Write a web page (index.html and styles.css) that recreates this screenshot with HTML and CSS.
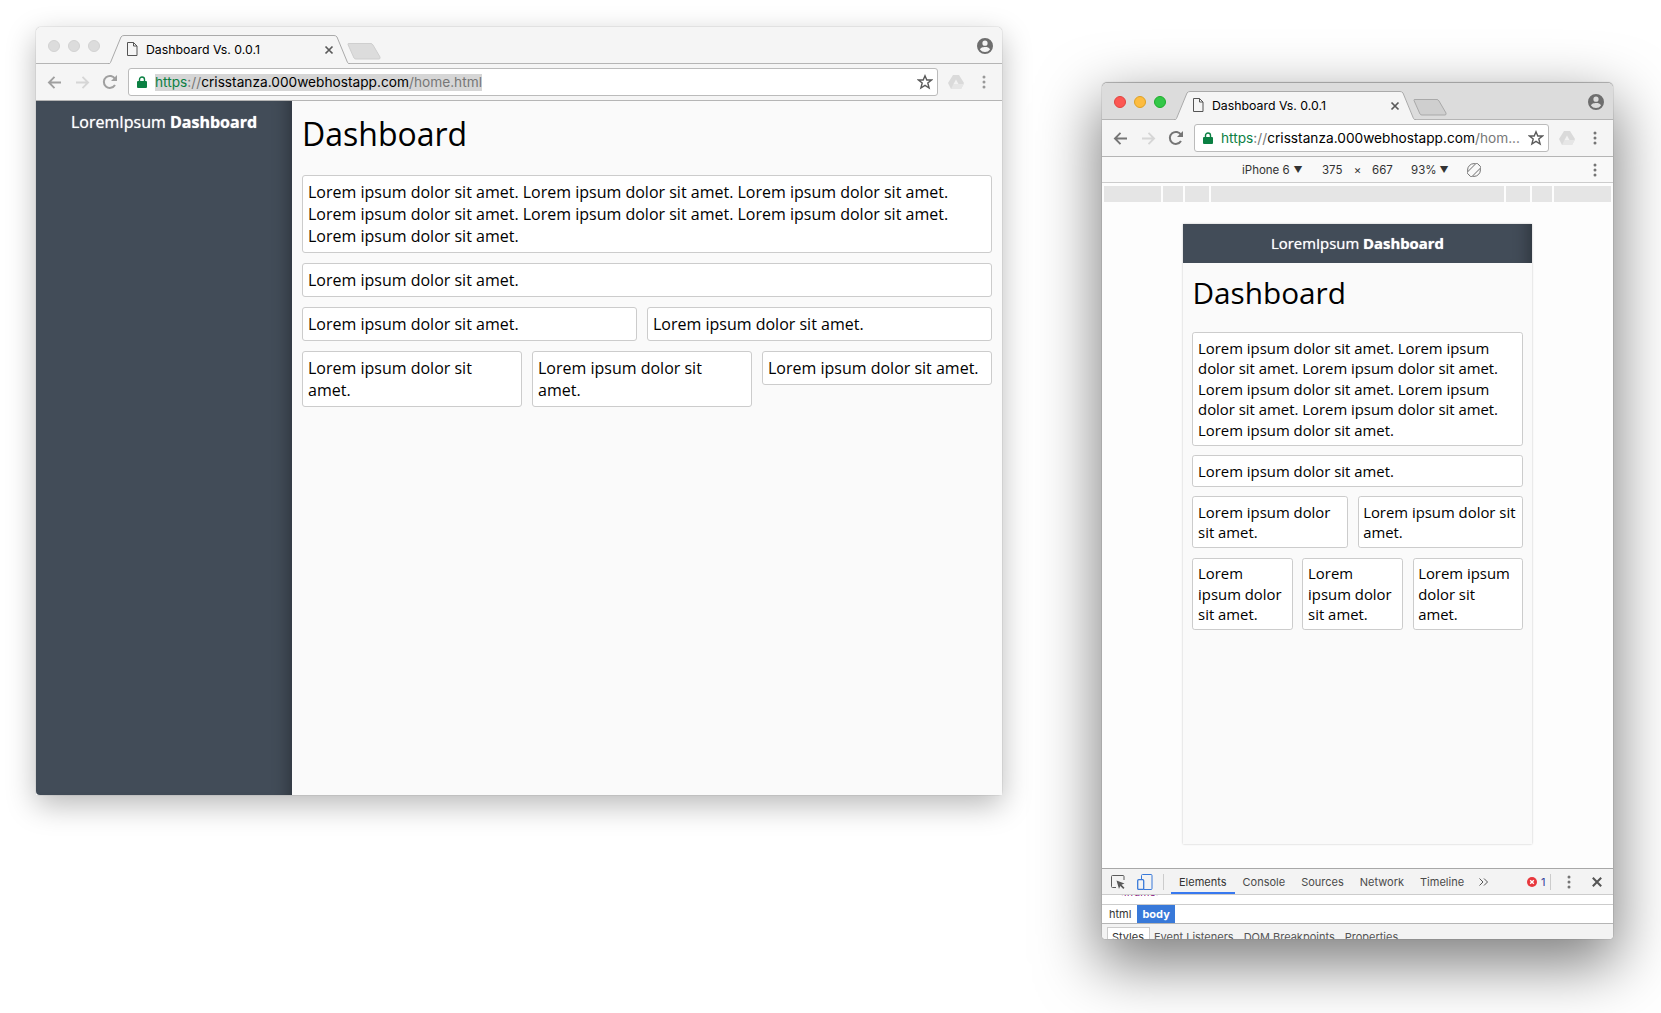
FILE: index.html
```html
<!DOCTYPE html>
<html>
<head>
<meta charset="utf-8">
	<title>Dashboard Vs. 0.0.1</title>
	<link rel="stylesheet" href="styles.css">
</head>
<body>
<svg class="sprite" width="0" height="0">
	<symbol id="i-tab" viewBox="0 0 242 29"><path class="tab-fill" d="M0 29L2 28 13 2Q14 0 16 0H226Q228 0 229 2L240 28 242 29Z"/><path class="tab-line" d="M0 28.5H1.500Q2 28.500 2.500 27.500L13 2Q14 .5 16 .5H226Q228 .5 229 2L239.500 27.500Q240 28.500 241 28.500H242"/></symbol>
	<symbol id="i-new" viewBox="0 0 34 17"><path d="M1 1.500Q.5.5 2 .5H24Q25 .5 26 2L33 14Q33.500 16 32 16H9Q7.500 16 7 15Z"/></symbol>
	<symbol id="i-doc" viewBox="0 0 12 14"><path d="M1.500.5H7.500L11 4V13.500H1.500ZM7.500.5V4H11" fill="none" stroke="currentColor"/></symbol>
	<symbol id="i-close" viewBox="0 0 10 10"><path d="M1.500 1.500L8.500 8.500M8.500 1.500L1.500 8.500" fill="none" stroke="currentColor" stroke-width="1.700"/></symbol>
	<symbol id="i-user" viewBox="0 0 16 16"><path fill-rule="evenodd" fill="currentColor" d="M8 0a8 8 0 1 0 0 16A8 8 0 0 0 8 0ZM8 2.600a2.600 2.600 0 1 1 0 5.200 2.600 2.600 0 0 1 0-5.200ZM8 14a6 6 0 0 1-5-2.600c0-1.700 3.300-2.500 5-2.500s5 .8 5 2.500A6 6 0 0 1 8 14Z"/></symbol>
	<symbol id="i-back" viewBox="0 0 16 14"><path d="M15 7H2M8 1L2 7l6 6" fill="none" stroke="currentColor" stroke-width="2"/></symbol>
	<symbol id="i-fwd" viewBox="0 0 16 14"><path d="M1 7H14M8 1l6 6-6 6" fill="none" stroke="currentColor" stroke-width="2"/></symbol>
	<symbol id="i-reload" viewBox="0 0 16 16"><path d="M13 11a6 6 0 1 1 .1-6" fill="none" stroke="currentColor" stroke-width="2"/><path d="M15 1V7H9Z" fill="currentColor"/></symbol>
	<symbol id="i-lock" viewBox="0 0 10 12"><path d="M2.500 5V3.500a2.500 2.500 0 0 1 5 0V5" fill="none" stroke="currentColor" stroke-width="1.400"/><rect y="5" width="10" height="7" rx="1" fill="currentColor"/></symbol>
	<symbol id="i-star" viewBox="0 0 16 16"><path d="M8 1.800L9.800 6H14.500L10.800 9 12.100 14 8 11.300 3.900 14 5.200 9 1.500 6H6.200Z" fill="none" stroke="currentColor" stroke-width="1.400"/></symbol>
	<symbol id="i-drive" viewBox="0 0 16 14"><path d="M5 0H11L16 8 13 14H3L0 8Z" fill="#dadada"/><path d="M8 4.500L10.500 9H5.500Z" fill="#f2f2f2"/><path d="M3 14L5.500 9H16L13 14Z" fill="#e6e6e6"/></symbol>
	<symbol id="i-dots" viewBox="0 0 4 14"><circle cx="2" cy="2" r="1.500" fill="currentColor"/><circle cx="2" cy="7" r="1.500" fill="currentColor"/><circle cx="2" cy="12" r="1.500" fill="currentColor"/></symbol>
	<symbol id="i-rotate" viewBox="0 0 14 14"><g fill="none" stroke="currentColor" stroke-width=".9"><circle cx="7" cy="7" r="6.400"/><rect x="3.800" y="0" width="6.400" height="14" rx="1" transform="rotate(45 7 7)" fill="#f9f9f9"/></g></symbol>
	<symbol id="i-inspect" viewBox="0 0 14 14"><path d="M5 12.500H1.500a1 1 0 0 1-1-1V1.500a1 1 0 0 1 1-1H12a1 1 0 0 1 1 1V5" fill="none" stroke="currentColor"/><path d="M5.500 5.500L13.500 8.500 10.500 9.800 13.500 12.800 12.300 14 9.300 11 8 14Z" fill="currentColor"/></symbol>
	<symbol id="i-device" viewBox="0 0 16 16"><path d="M4.500 5.500V1.500a1 1 0 0 1 1-1H14a1 1 0 0 1 1 1V14.500a1 1 0 0 1-1 1H7" fill="none" stroke="#3879d9"/><rect x=".7" y="5.700" width="6" height="9.700" rx="1" fill="#f3f3f3" stroke="#3879d9" stroke-width="1.300"/></symbol>
	<symbol id="i-error" viewBox="0 0 10 10"><circle cx="5" cy="5" r="5" fill="#e8383d"/><path d="M3.200 3.200L6.800 6.800M6.800 3.200L3.200 6.800" stroke="#fff" stroke-width="1.400"/></symbol>
	<symbol id="i-more" viewBox="0 0 10 8"><path d="M.5.5L4 4 .5 7.500M5 .5L8.500 4 5 7.500" fill="none" stroke="currentColor"/></symbol>
</svg>

<!-- desktop window -->
<div class="window window-wide">
	<div class="tabstrip">
		<div class="lights">
			<span class="light"></span><span class="light"></span><span class="light"></span>
		</div>
		<div class="tab">
			<svg class="tab-shape"><use href="#i-tab"/></svg>
			<svg class="tab-doc"><use href="#i-doc"/></svg>
			<span class="tab-title">Dashboard Vs. 0.0.1</span>
			<svg class="tab-close"><use href="#i-close"/></svg>
		</div>
		<svg class="newtab"><use href="#i-new"/></svg>
		<svg class="avatar"><use href="#i-user"/></svg>
	</div>
	<div class="toolbar">
		<span class="btn"><svg class="ic-arrow"><use href="#i-back"/></svg></span>
		<span class="btn btn-off"><svg class="ic-arrow"><use href="#i-fwd"/></svg></span>
		<span class="btn"><svg class="ic-reload"><use href="#i-reload"/></svg></span>
		<div class="omnibox">
			<svg class="ic-lock"><use href="#i-lock"/></svg>
			<span class="url url-selected"><span class="u-green">https</span><span class="u-grey">://</span>crisstanza.000webhostapp.com<span class="u-grey">/home.html</span></span>
			<svg class="ic-star"><use href="#i-star"/></svg>
		</div>
		<span class="btn"><svg class="ic-drive"><use href="#i-drive"/></svg></span>
		<span class="btn"><svg class="ic-dots"><use href="#i-dots"/></svg></span>
	</div>
	<div class="site site-wide">
		<div class="brand">LoremIpsum <b>Dashboard</b></div>
		<div class="main">
			<h1>Dashboard</h1>
			<div class="card">Lorem ipsum dolor sit amet. Lorem ipsum dolor sit amet. Lorem ipsum dolor sit amet. Lorem ipsum dolor sit amet. Lorem ipsum dolor sit amet. Lorem ipsum dolor sit amet. Lorem ipsum dolor sit amet.</div>
			<div class="card">Lorem ipsum dolor sit amet.</div>
			<div class="row">
				<div class="col-2"><div class="card">Lorem ipsum dolor sit amet.</div></div>
				<div class="col-2"><div class="card">Lorem ipsum dolor sit amet.</div></div>
			</div>
			<div class="row">
				<div class="col-3"><div class="card">Lorem ipsum dolor sit amet.</div></div>
				<div class="col-3"><div class="card">Lorem ipsum dolor sit amet.</div></div>
				<div class="col-3"><div class="card">Lorem ipsum dolor sit amet.</div></div>
			</div>
		</div>
	</div>
</div>

<!-- window with devtools -->
<div class="window window-phone">
	<div class="tabstrip">
		<div class="lights">
			<span class="light light-red"></span><span class="light light-yellow"></span><span class="light light-green"></span>
		</div>
		<div class="tab">
			<svg class="tab-shape"><use href="#i-tab"/></svg>
			<svg class="tab-doc"><use href="#i-doc"/></svg>
			<span class="tab-title">Dashboard Vs. 0.0.1</span>
			<svg class="tab-close"><use href="#i-close"/></svg>
		</div>
		<svg class="newtab"><use href="#i-new"/></svg>
		<svg class="avatar"><use href="#i-user"/></svg>
	</div>
	<div class="toolbar">
		<span class="btn"><svg class="ic-arrow"><use href="#i-back"/></svg></span>
		<span class="btn btn-off"><svg class="ic-arrow"><use href="#i-fwd"/></svg></span>
		<span class="btn"><svg class="ic-reload"><use href="#i-reload"/></svg></span>
		<div class="omnibox">
			<svg class="ic-lock"><use href="#i-lock"/></svg>
			<span class="url"><span class="u-green">https</span><span class="u-grey">://</span>crisstanza.000webhostapp.com<span class="u-grey">/hom...</span></span>
			<svg class="ic-star"><use href="#i-star"/></svg>
		</div>
		<span class="btn"><svg class="ic-drive"><use href="#i-drive"/></svg></span>
		<span class="btn"><svg class="ic-dots"><use href="#i-dots"/></svg></span>
	</div>
	<div class="devicebar">
		<span class="d-name">iPhone 6</span><span class="d-arrow">▼</span>
		<span class="d-num">375</span><span class="d-x">×</span><span class="d-num">667</span>
		<span class="d-zoom">93%</span><span class="d-arrow">▼</span>
		<svg class="ic-rotate"><use href="#i-rotate"/></svg>
		<svg class="ic-dots d-dots"><use href="#i-dots"/></svg>
	</div>
	<div class="stage">
		<div class="ruler">
			<span class="r-end"></span><span class="r-a"></span><span class="r-b"></span><span class="r-mid"></span><span class="r-b"></span><span class="r-a"></span><span class="r-end"></span>
		</div>
		<div class="site site-phone">
			<div class="brand">LoremIpsum <b>Dashboard</b></div>
			<div class="main">
				<h1>Dashboard</h1>
				<div class="card">Lorem ipsum dolor sit amet. Lorem ipsum dolor sit amet. Lorem ipsum dolor sit amet. Lorem ipsum dolor sit amet. Lorem ipsum dolor sit amet. Lorem ipsum dolor sit amet. Lorem ipsum dolor sit amet.</div>
				<div class="card">Lorem ipsum dolor sit amet.</div>
				<div class="row">
					<div class="col-2"><div class="card">Lorem ipsum dolor sit amet.</div></div>
					<div class="col-2"><div class="card">Lorem ipsum dolor sit amet.</div></div>
				</div>
				<div class="row">
					<div class="col-3"><div class="card">Lorem ipsum dolor sit amet.</div></div>
					<div class="col-3"><div class="card">Lorem ipsum dolor sit amet.</div></div>
					<div class="col-3"><div class="card">Lorem ipsum dolor sit amet.</div></div>
				</div>
			</div>
		</div>
	</div>
	<div class="devtools">
		<div class="dt-bar">
			<svg class="ic-inspect"><use href="#i-inspect"/></svg>
			<svg class="ic-device"><use href="#i-device"/></svg>
			<span class="dt-sep"></span>
			<span class="dt-tab dt-active">Elements</span>
			<span class="dt-tab">Console</span>
			<span class="dt-tab">Sources</span>
			<span class="dt-tab">Network</span>
			<span class="dt-tab">Timeline</span>
			<svg class="ic-more"><use href="#i-more"/></svg>
			<svg class="ic-error"><use href="#i-error"/></svg>
			<span class="dt-count">1</span>
			<span class="dt-sep dt-sep2"></span>
			<svg class="ic-dots dt-dots"><use href="#i-dots"/></svg>
			<svg class="dt-close"><use href="#i-close"/></svg>
		</div>
		<div class="dt-dom"><span>&lt;iframe&gt;</span></div>
		<div class="dt-crumbs"><span class="crumb">html</span><span class="crumb crumb-on">body</span></div>
		<div class="dt-sub">
			<span class="sub sub-on">Styles</span>
			<span class="sub">Event Listeners</span>
			<span class="sub">DOM Breakpoints</span>
			<span class="sub">Properties</span>
		</div>
	</div>
</div>
</body>
</html>
```

FILE: styles.css
```css
*{margin: 0;padding: 0;box-sizing: border-box;}
body{
	position: relative;
	height: 1013px;
	overflow: hidden;
	background: #fff;
	font-family: "Open Sans", sans-serif;
	color: #000;
}
svg{display: block;flex: none;}
.sprite{position: absolute;}

/* windows */
.window{
	position: absolute;
	display: flex;
	flex-direction: column;
	border-radius: 5px 5px 4px 4px;
	font-family: Inter, "Liberation Sans", sans-serif;
}
.window-wide{
	left: 36px;
	top: 27px;
	width: 966px;
	height: 768px;
	box-shadow: 0 0 1px rgba(0,0,0,.5), 0 10px 30px rgba(0,0,0,.28);
}
.window-phone{
	left: 1102px;
	top: 83px;
	width: 511px;
	height: 856px;
	box-shadow: 0 -1px 1px rgba(0,0,0,.25), 0 0 1px rgba(0,0,0,.5), 0 22px 60px 4px rgba(0,0,0,.5);
}

/* tab strip */
.tabstrip{
	display: flex;
	align-items: flex-start;
	height: 37px;
	padding-top: 8px;
	background: #f5f5f5;
	border-bottom: 1px solid #b5b5b5;
	border-radius: 5px 5px 0 0;
}
.window-phone .tabstrip{background: #dcdcdc;}
.lights{
	display: flex;
	gap: 8px;
	width: 72px;
	padding: 5px 0 0 12px;
}
.light{
	width: 12px;
	height: 12px;
	border-radius: 50%;
	background: #dcdcdc;
	border: 1px solid #d2d2d2;
}
.light-red{background: #fc5753;border-color: #e0443e;}
.light-yellow{background: #fdbc40;border-color: #dea123;}
.light-green{background: #33c748;border-color: #1dad2b;}
.tab{
	position: relative;
	display: flex;
	width: 242px;
	height: 29px;
	padding: 7px 0 0 18px;
	align-items: flex-start;
	z-index: 1;
}
.tab-shape{position: absolute;left: 0;top: 0;width: 242px;height: 29px;}
.tab-fill{fill: #f5f5f5;}
.tab-line{fill: none;stroke: #aaa;}
.tab-doc,.tab-title,.tab-close{position: relative;}
.tab-doc{width: 12px;height: 14px;color: #555;}
.tab-title{
	margin-left: 8px;
	font-size: 12.300px;
	line-height: 15px;
	white-space: nowrap;
	width: 178px;
}
.tab-close{width: 10px;height: 10px;margin: 3px 0 0 0;color: #5a5a5a;}
.newtab{
	width: 34px;
	height: 17px;
	margin: 8px 0 0 -3px;
	fill: #dcdcdc;
	stroke: #cfcfcf;
}
.window-phone .newtab{fill: #cfcfcf;stroke: #a9a9a9;}
.avatar{
	width: 16px;
	height: 16px;
	margin: 3px 9px 0 auto;
	color: #6e6e6e;
}

/* toolbar */
.toolbar{
	display: flex;
	align-items: center;
	height: 37px;
	padding: 0 4px;
	background: #f5f5f5;
	border-bottom: 1px solid #b5b5b5;
}
.btn{
	display: flex;
	align-items: center;
	justify-content: center;
	width: 28px;
	height: 28px;
	color: #757575;
}
.window-wide .btn{color: #a0a0a0;}
.btn-off,.window-wide .btn-off{color: #d6d6d6;}
.ic-arrow{width: 15px;height: 13px;}
.ic-reload{width: 16px;height: 16px;}
.ic-drive{width: 16px;height: 14px;}
.ic-dots{width: 4px;height: 14px;color: #757575;}
.window-wide .ic-dots{color: #999;}
.omnibox{
	display: flex;
	align-items: center;
	flex: 1;
	height: 28px;
	margin: 0 4px;
	padding: 0 4px 0 8px;
	background: #fff;
	border: 1px solid #bbb;
	border-radius: 3px;
}
.ic-lock{width: 10px;height: 12px;color: #0b8043;}
.url{
	margin-left: 8px;
	font-size: 13.700px;
	line-height: 17px;
	white-space: nowrap;
}
.url-selected{background: #d6d6d6;}
.u-green{color: #0b8043;}
.u-grey{color: #777;}
.ic-star{width: 16px;height: 16px;margin-left: auto;color: #5a5a5a;}

/* device mode bar */
.devicebar{
	display: flex;
	align-items: center;
	height: 26px;
	padding-left: 140px;
	background: #f9f9f9;
	border-bottom: 1px solid #ccc;
	font-size: 11.500px;
	color: #333;
}
.d-name{width: 50px;white-space: nowrap;}
.d-arrow{width: 12px;text-align: center;font-size: 9px;color: #333;}
.d-num{width: 21px;}
.d-name + .d-arrow + .d-num{margin-left: 18px;}
.d-x{width: 29px;text-align: center;}
.d-zoom{width: 24px;margin-left: 18px;}
.d-zoom + .d-arrow{margin-left: 3px;}
.ic-rotate{width: 14px;height: 14px;margin-left: 17px;color: #666;}
.d-dots{margin-left: 112px;}

/* page being shown */
.stage{
	flex: 1;
	display: flex;
	flex-direction: column;
	align-items: center;
	background: #fdfdfd;
	overflow: hidden;
}
.ruler{
	display: flex;
	gap: 2px;
	align-self: stretch;
	height: 16px;
	margin: 3px 2px 0;
}
.ruler span{background: #e5e5e5;height: 16px;}
.r-end{width: 57px;}
.r-a{width: 20px;}
.r-b{width: 24px;}
.r-mid{flex: 1;}

.site{
	background: #fafafa;
	color: #000;
	font-family: "Open Sans", sans-serif;
	font-size: 16px;
	line-height: 22px;
}
.site-wide{
	flex: 1;
	display: flex;
}
.site-phone{
	width: 375px;
	height: 666px;
	margin-top: 24px;
	zoom: .93;
	box-shadow: 0 0 2px rgba(0,0,0,.25);
}
.brand{
	background: #424c58;
	box-shadow: inset -18px 0 16px -14px rgba(0,0,0,.3);
	color: #fff;
	text-align: center;
	padding: 10px;
	text-shadow: 0 0 1px rgba(255,255,255,.8);
}
.site-wide .brand{width: 256px;border-radius: 0 0 0 4px;}
.site-phone .brand{padding: 9px 10px 11px;}
.main{flex: 1;padding: 10px;}
h1{
	font-size: 32px;
	line-height: 44px;
	font-weight: 400;
	margin: 1px 0 19px;
}
.site-phone h1{margin: 0 0 20px;}
.card{
	background: #fff;
	border: 1px solid #ccc;
	border-radius: 3px;
	padding: 5px;
	margin-bottom: 10px;
}
.row{display: flex;align-items: flex-start;}
.col-2{width: 50%;padding-right: 10px;}
.col-3{width: 33.333%;padding-right: 10px;}
.col-2:last-child,.col-3:last-child{padding-right: 0;}

/* devtools */
.devtools{
	height: 71px;
	font-size: 11px;
	color: #333;
	background: #fff;
	border-top: 1px solid #a8a8a8;
	overflow: hidden;
	border-radius: 0 0 4px 4px;
}
.dt-bar{
	display: flex;
	align-items: center;
	height: 26px;
	padding-right: 10px;
	background: #f3f3f3;
	border-bottom: 1px solid #ccc;
}
.ic-inspect{width: 14px;height: 14px;margin-left: 9px;color: #5a5a5a;}
.ic-device{width: 16px;height: 16px;margin-left: 12px;}
.dt-sep{width: 1px;height: 16px;background: #ccc;margin: 0 7px 0 10px;}
.dt-tab{
	display: flex;
	align-items: center;
	height: 25px;
	padding: 0 8px;
	color: #4a4a4a;
}
.dt-active{color: #333;box-shadow: inset 0 -2px 0 #3879f0;}
.ic-more{width: 10px;height: 8px;margin-left: 7px;color: #555;}
.ic-error{width: 10px;height: 10px;margin-left: auto;}
.dt-count{margin-left: 4px;width: 7px;color: #33439c;}
.dt-sep2{margin: 0 0 0 2px;}
.dt-dots{margin-left: 16px;}
.dt-close{width: 12px;height: 12px;margin-left: 20px;color: #555;}
.dt-dom{height: 10px;overflow: hidden;border-bottom: 1px solid #ccc;padding-left: 15px;}
.dt-dom span{display: block;margin-top: -9px;color: #881280;font-size: 10.500px;line-height: 14px;}
.dt-crumbs{
	display: flex;
	align-items: center;
	height: 19px;
	border-bottom: 1px solid #b5b5b5;
}
.crumb{padding: 0 6px 0 7px;line-height: 18px;height: 18px;}
.crumb-on{background: #3879d9;color: #fff;font-weight: 700;padding: 0 5px;}
.dt-sub{
	display: flex;
	height: 16px;
	padding: 3px 0 0 5px;
	background: #f3f3f3;
	overflow: hidden;
	color: #555;
}
.sub{padding: 3px 5px 0;line-height: 14px;white-space: nowrap;}
.sub-on{background: #fff;border: 1px solid #ccc;padding: 2px 5px 0 4px;color: #333;margin-right: -1px;}
```
